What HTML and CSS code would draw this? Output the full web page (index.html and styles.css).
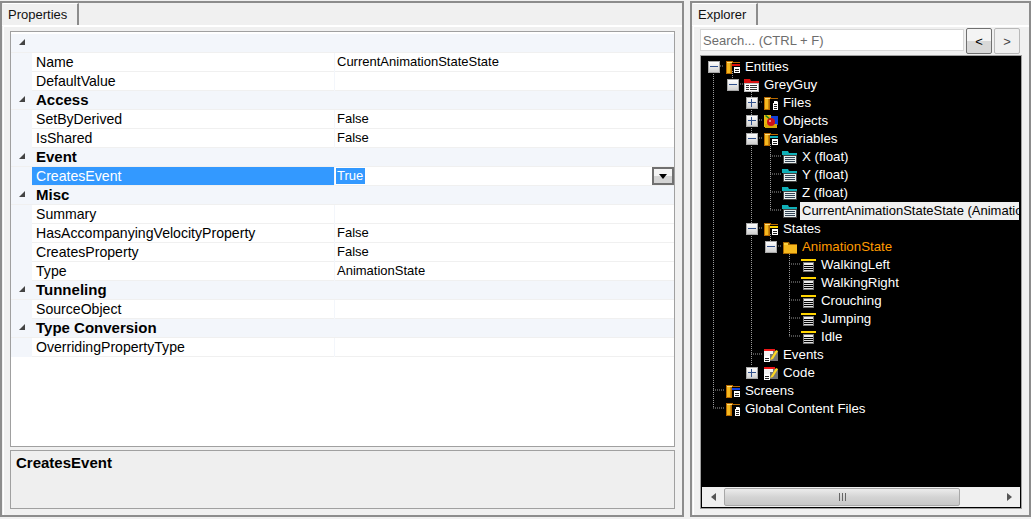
FILE: index.html
```html
<!DOCTYPE html>
<html lang="en">
<head>
    <meta charset="UTF-8">
    <title>Properties and Explorer</title>
    <link rel="stylesheet" href="styles.css">
</head>
<body>
<svg class="defs" width="0" height="0">
    <defs>
        <symbol id="folder" viewBox="0 0 16 16">
            <path d="M1 2h7v1h7v1H7v11H1z" fill="#b86a00"/>
            <path d="M2 3h5v1H2z" fill="#ffe080"/>
            <path d="M2 4h4v10H2z" fill="#f5b81e"/>
            <path d="M5 4h1v10H5z" fill="#c88810"/>
        </symbol>
        <symbol id="card" viewBox="0 0 16 16">
            <path d="M7 5h8v2H7z" fill="currentColor"/>
            <path d="M9 8h6v6H9z" fill="#fff"/>
            <path d="M10 10h4v1h-4zM10 12h4v1h-4z" fill="#222"/>
        </symbol>
        <symbol id="doc" viewBox="0 0 16 16">
            <path d="M11 6h3l1 1v8h-5V8h1z" fill="#fff"/>
            <path d="M11 9h3v1h-3zM11 11h3v1h-3zM11 13h3v1h-3z" fill="#222"/>
        </symbol>
        <symbol id="entity" viewBox="0 0 16 16">
            <path d="M0 2h6l1 2h8v2H0z" fill="#d81010"/>
            <path d="M0 6h15v9H0z" fill="#bbb"/>
            <path d="M1 7h13v7H1z" fill="#fff"/>
            <path d="M2 8h3v1H2zM6 8h7v1H6zM2 10h3v1H2zM6 10h7v1H6zM2 12h3v1H2zM6 12h7v1H6z" fill="#333"/>
        </symbol>
        <symbol id="objects" viewBox="0 0 16 16">
            <path d="M1 2h7v12H1z" fill="#e8b810"/>
            <path d="M8 3h7v9H8z" fill="#1040d8"/>
            <path d="M2 11h12v4H2z" fill="#d8a808"/>
            <path d="M3 2l5 4-1 1-5-4z" fill="#108020"/>
            <circle cx="8" cy="9" r="4" fill="#d01018"/>
            <circle cx="7" cy="8" r="1" fill="#ffb0b0"/>
        </symbol>
        <symbol id="plainfolder" viewBox="0 0 16 16">
            <path d="M1 3h6l1 2h7v10H1z" fill="#a86800"/>
            <path d="M2 6h13v8H2z" fill="#f5b81e"/>
            <path d="M2 4h4v2H2z" fill="#f8d040"/>
        </symbol>
        <symbol id="variable" viewBox="0 0 16 16">
            <path d="M0 2h6l1 2h8v2H0z" fill="#10b0b8"/>
            <path d="M1 6h14v9H1z" fill="#444"/>
            <path d="M2 7h12v7H2z" fill="#e8f0f0"/>
            <path d="M3 8h10v1H3zM3 10h10v1H3zM3 12h10v1H3z" fill="#345"/>
        </symbol>
        <symbol id="state" viewBox="0 0 16 16">
            <path d="M0 2h15v2H0z" fill="#ffd400"/>
            <path d="M2 5h11v10H2z" fill="#777"/>
            <path d="M3 6h9v8H3z" fill="#000"/>
            <path d="M3 6h9v2H3z" fill="#eee"/>
            <path d="M3 9h9v1H3zM3 11h9v1H3zM3 13h9v1H3z" fill="#ddd"/>
        </symbol>
        <symbol id="code" viewBox="0 0 16 16">
            <path d="M1 2h11v2H1z" fill="#f01818"/>
            <path d="M5 4h10v10H5z" fill="#777"/>
            <path d="M1 4h9v3H7v4H1z" fill="#f4f4f4"/>
            <path d="M1 9h6v6H1z" fill="#fff"/>
            <path d="M2 11h4v1H2zM2 13h4v1H2z" fill="#222"/>
            <path d="M8 11l5-8 2 1-5 8-3 1z" fill="#ffd820"/>
        </symbol>
    </defs>
</svg>

<div class="pane props">
    <div class="tabs"><span class="tab">Properties</span></div>
    <div class="page">
        <div class="grid">
            <div class="row cat"><i class="tri"></i><span></span></div>
            <div class="row"><span class="lab">Name</span><span class="val">CurrentAnimationStateState</span></div>
            <div class="row"><span class="lab">DefaultValue</span><span class="val"></span></div>
            <div class="row cat"><i class="tri"></i><span>Access</span></div>
            <div class="row"><span class="lab">SetByDerived</span><span class="val">False</span></div>
            <div class="row"><span class="lab">IsShared</span><span class="val">False</span></div>
            <div class="row cat"><i class="tri"></i><span>Event</span></div>
            <div class="row sel">
                <span class="lab">CreatesEvent</span>
                <span class="val"><span class="hl">True</span><button class="drop"><i></i></button></span>
            </div>
            <div class="row cat"><i class="tri"></i><span>Misc</span></div>
            <div class="row"><span class="lab">Summary</span><span class="val"></span></div>
            <div class="row"><span class="lab">HasAccompanyingVelocityProperty</span><span class="val">False</span></div>
            <div class="row"><span class="lab">CreatesProperty</span><span class="val">False</span></div>
            <div class="row"><span class="lab">Type</span><span class="val">AnimationState</span></div>
            <div class="row cat"><i class="tri"></i><span>Tunneling</span></div>
            <div class="row"><span class="lab">SourceObject</span><span class="val"></span></div>
            <div class="row cat"><i class="tri"></i><span>Type Conversion</span></div>
            <div class="row"><span class="lab">OverridingPropertyType</span><span class="val"></span></div>
        </div>
        <div class="desc">CreatesEvent</div>
    </div>
</div>

<div class="pane explorer">
    <div class="tabs"><span class="tab">Explorer</span></div>
    <div class="page">
        <div class="searchbar">
            <input class="search" type="text" placeholder="Search... (CTRL + F)">
            <button class="nav on">&lt;</button>
            <button class="nav">&gt;</button>
        </div>
        <div class="treebox">
            <div class="tree">
                <!-- dotted connectors, coordinates are the tree's own -->
                <svg class="lines" width="318" height="430">
                    <path d="M12.5 17V353M19 11h4M12 335h11M12 353h11M31.5 16v8M37 29h5M50.5 35V311M56 47h5M56 65h5M56 83h5M56 173h5M50 299h11M69.5 89V155M69 101h11M69 119h11M69 137h11M69 155h11M69.5 179v7M75 191h5M88.5 197V281M88 209h11M88 227h11M88 245h11M88 263h11M88 281h11"/>
                </svg>
                <div class="node l0"><b class="exp minus"></b><svg class="ico"><use href="#folder"/><use href="#card" color="#e01010"/></svg><span>Entities</span></div>
                <div class="node l1"><b class="exp minus"></b><svg class="ico"><use href="#entity"/></svg><span>GreyGuy</span></div>
                <div class="node l2"><b class="exp plus"></b><svg class="ico"><use href="#folder"/><use href="#doc"/></svg><span>Files</span></div>
                <div class="node l2"><b class="exp plus"></b><svg class="ico"><use href="#objects"/></svg><span>Objects</span></div>
                <div class="node l2"><b class="exp minus"></b><svg class="ico"><use href="#folder"/><use href="#card" color="#10b0b8"/></svg><span>Variables</span></div>
                <div class="node l3"><b class="exp"></b><svg class="ico"><use href="#variable"/></svg><span>X (float)</span></div>
                <div class="node l3"><b class="exp"></b><svg class="ico"><use href="#variable"/></svg><span>Y (float)</span></div>
                <div class="node l3"><b class="exp"></b><svg class="ico"><use href="#variable"/></svg><span>Z (float)</span></div>
                <div class="node l3"><b class="exp"></b><svg class="ico"><use href="#variable"/></svg><span class="picked">CurrentAnimationStateState (Animation)</span></div>
                <div class="node l2"><b class="exp minus"></b><svg class="ico"><use href="#folder"/><use href="#card" color="#ffd400"/></svg><span>States</span></div>
                <div class="node l3"><b class="exp minus"></b><svg class="ico"><use href="#plainfolder"/></svg><span class="orange">AnimationState</span></div>
                <div class="node l4"><b class="exp"></b><svg class="ico"><use href="#state"/></svg><span>WalkingLeft</span></div>
                <div class="node l4"><b class="exp"></b><svg class="ico"><use href="#state"/></svg><span>WalkingRight</span></div>
                <div class="node l4"><b class="exp"></b><svg class="ico"><use href="#state"/></svg><span>Crouching</span></div>
                <div class="node l4"><b class="exp"></b><svg class="ico"><use href="#state"/></svg><span>Jumping</span></div>
                <div class="node l4"><b class="exp"></b><svg class="ico"><use href="#state"/></svg><span>Idle</span></div>
                <div class="node l2"><b class="exp"></b><svg class="ico"><use href="#code"/></svg><span>Events</span></div>
                <div class="node l2"><b class="exp plus"></b><svg class="ico"><use href="#code"/></svg><span>Code</span></div>
                <div class="node l0"><b class="exp"></b><svg class="ico"><use href="#folder"/><use href="#card" color="#1040e0"/></svg><span>Screens</span></div>
                <div class="node l0"><b class="exp"></b><svg class="ico"><use href="#folder"/><use href="#doc"/></svg><span>Global Content Files</span></div>
            </div>
            <div class="hscroll">
                <i class="arrow left"></i>
                <div class="track"><div class="thumb"><i></i><i></i><i></i></div></div>
                <i class="arrow right"></i>
            </div>
        </div>
    </div>
</div>
</body>
</html>
```

FILE: styles.css
```css
* {
    box-sizing: border-box;
    margin: 0;
    padding: 0;
}

html, body {
    width: 1031px;
    height: 519px;
    overflow: hidden;
}

body {
    display: flex;
    gap: 6px;
    padding: 1px 0 2px 0;
    background: #f0f0f0;
    font-family: "Liberation Sans", Arial, sans-serif;
    font-size: 13px;
    color: #000;
}

.defs {
    position: absolute;
}

.pane {
    display: flex;
    flex-direction: column;
    border: 2px solid #8c8c8c;
    background: #f0f0f0;
}

.props {
    width: 684px;
}

.explorer {
    width: 341px;
}

.tabs {
    height: 23px;
    padding: 0 0 0 1px;
    display: flex;
    border-bottom: 1px solid #fff;
    flex-shrink: 0;
}

.tab {
    height: 22px;
    padding: 3px 10px 0 5px;
    border-right: 2px solid #8c8c8c;
    border-top: 1px solid #fff;
    line-height: 16px;
    color: #111;
}

.page {
    flex: 1;
    display: flex;
    flex-direction: column;
    min-height: 0;
    margin: 0 0 0 1px;
    padding: 4px 7px 6px 6px;
    border-left: 1px solid #fff;
    border-top: 1px solid #fff;
}

/* property grid */
.grid {
    height: 416px;
    border: 1px solid #a0a0a0;
    background: #fff;
    padding-top: 2px;
}

.row {
    display: flex;
    height: 19px;
    padding-left: 21px;
    line-height: 19px;
    background: #f3f6fb;
    position: relative;
}

.lab {
    width: 302px;
    padding-left: 4px;
    background: #fff;
    border-bottom: 1px solid #f0f0f0;
    font-size: 14.1px;
}

.val {
    flex: 1;
    margin-left: 1px;
    padding-left: 2px;
    background: #fff;
    border-bottom: 1px solid #f0f0f0;
    display: flex;
    justify-content: space-between;
    line-height: 17px;
}

.cat {
    font-weight: bold;
    font-size: 15px;
    line-height: 17px;
    padding-left: 25px;
    border-bottom: 1px solid #f0f0f0;
}

.tri {
    position: absolute;
    left: 8px;
    top: 5px;
    width: 0;
    height: 0;
    border-style: solid;
    border-width: 0 0 6px 6px;
    border-color: transparent transparent #444 transparent;
}

.sel .lab {
    background: #3399ff;
    color: #fff;
}

.hl {
    background: #3399ff;
    color: #fff;
    height: 16px;
    line-height: 16px;
    padding: 0 2px 0 1px;
    margin: 1px 0 0 -1px;
}

.drop {
    width: 22px;
    height: 18px;
    border: 2px solid #707070;
    background: linear-gradient(#f4f4f4 50%, #d4d4d4 50%);
    display: flex;
    align-items: center;
    justify-content: center;
}

.drop i {
    width: 0;
    height: 0;
    border-style: solid;
    border-width: 5px 4.5px 0 4.5px;
    border-color: #000 transparent transparent transparent;
}

.desc {
    flex: 1;
    margin-top: 3px;
    border: 1px solid #a0a0a0;
    background: #efefef;
    padding: 4px 5px;
    font-weight: bold;
    font-size: 15px;
    line-height: 15px;
}

/* explorer */
.searchbar {
    display: flex;
    align-items: center;
    gap: 2px;
    height: 26px;
    margin: -3px 0 1px 0;
}

.search {
    width: 264px;
    height: 22px;
    margin-bottom: 2px;
    padding-left: 2px;
    border: 1px solid #d8d8d8;
    background: #fff;
    font: 13px "Liberation Sans", Arial, sans-serif;
    outline: none;
}

.search::placeholder {
    color: #6d6d6d;
    opacity: 1;
}

.nav {
    width: 26px;
    height: 26px;
    border: 1px solid #b8b8b8;
    border-radius: 2px;
    background: #f0f0f0;
    font: 13px "Liberation Sans", Arial, sans-serif;
    color: #444;
}

.nav.on {
    border-color: #707070;
    background: linear-gradient(#f4f4f4 50%, #d8d8d8 50%);
    color: #000;
}

.treebox {
    flex: 1;
    min-height: 0;
    display: flex;
    flex-direction: column;
    border: 1px solid #a0a0a0;
    background: #000;
}

.tree {
    flex: 1;
    min-height: 0;
    padding-top: 2px;
    position: relative;
    overflow: hidden;
    color: #fff;
    font-size: 13.3px;
}

.lines {
    position: absolute;
    left: 0;
    top: -1px;
}

.lines path {
    fill: none;
    stroke: #9a9a9a;
    stroke-width: 1;
    stroke-dasharray: 1 1;
}

.node {
    display: flex;
    align-items: center;
    height: 18px;
    line-height: 18px;
    white-space: nowrap;
    position: relative;
}

.l0 { padding-left: 7px; }
.l1 { padding-left: 26px; }
.l2 { padding-left: 45px; }
.l3 { padding-left: 64px; }
.l4 { padding-left: 83px; }

.exp {
    width: 12px;
    height: 12px;
    margin-right: 5px;
    flex-shrink: 0;
    position: relative;
}

.minus, .plus {
    border: 1px solid #a8a8a8;
    background: linear-gradient(#fff, #d0d0d0);
}

.minus::before, .plus::before {
    content: "";
    position: absolute;
    left: 1px;
    top: 4px;
    width: 8px;
    height: 1px;
    background: #30508c;
}

.plus::after {
    content: "";
    position: absolute;
    left: 4px;
    top: 1px;
    width: 1px;
    height: 8px;
    background: #30508c;
}

.ico {
    width: 16px;
    height: 16px;
    margin-right: 4px;
    flex-shrink: 0;
}

.picked {
    width: 219px;
    margin-left: -2px;
    padding-left: 2px;
    background: #f0f0f0;
    color: #000;
    overflow: hidden;
    font-size: 13px;
}

.orange {
    color: #ff9a00;
}

.hscroll {
    height: 20px;
    flex-shrink: 0;
    display: flex;
    align-items: center;
    margin: 0 1px 1px;
    background: #f0f0f0;
}

.track {
    flex: 1;
    height: 100%;
    padding: 1px 0;
}

.thumb {
    width: 236px;
    height: 100%;
    display: flex;
    justify-content: center;
    align-items: center;
    gap: 2px;
    border: 1px solid #a8a8a8;
    border-radius: 2px;
    background: linear-gradient(#ececec, #d4d4d4 50%, #c8c8c8);
}

.thumb i {
    width: 1px;
    height: 8px;
    background: #666;
}

.arrow {
    width: 22px;
    flex-shrink: 0;
    display: flex;
    justify-content: center;
}

.arrow::before {
    content: "";
    width: 0;
    height: 0;
    border-style: solid;
    border-width: 4px 5px;
}

.arrow.left::before {
    border-color: transparent #555 transparent transparent;
    margin-right: 5px;
}

.arrow.right::before {
    border-color: transparent transparent transparent #555;
    margin-left: 5px;
}
```
